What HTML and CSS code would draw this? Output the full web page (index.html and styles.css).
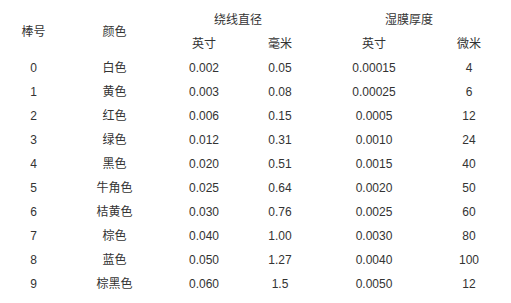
FILE: index.html
```html
<!DOCTYPE html>
<html lang="zh">
<head>
<meta charset="utf-8">
<link rel="stylesheet" href="styles.css">
</head>
<body>
<table class="spec">
  <colgroup>
    <col class="c1"><col class="c2"><col class="c3"><col class="c4"><col class="c5"><col class="c6">
  </colgroup>
  <thead>
    <tr>
      <th rowspan="2">棒号</th>
      <th rowspan="2">颜色</th>
      <th colspan="2">绕线直径</th>
      <th colspan="2">湿膜厚度</th>
    </tr>
    <tr>
      <th>英寸</th><th>毫米</th><th>英寸</th><th>微米</th>
    </tr>
  </thead>
  <tbody>
    <tr><td>0</td><td>白色</td><td>0.002</td><td>0.05</td><td>0.00015</td><td>4</td></tr>
    <tr><td>1</td><td>黄色</td><td>0.003</td><td>0.08</td><td>0.00025</td><td>6</td></tr>
    <tr><td>2</td><td>红色</td><td>0.006</td><td>0.15</td><td>0.0005</td><td>12</td></tr>
    <tr><td>3</td><td>绿色</td><td>0.012</td><td>0.31</td><td>0.0010</td><td>24</td></tr>
    <tr><td>4</td><td>黑色</td><td>0.020</td><td>0.51</td><td>0.0015</td><td>40</td></tr>
    <tr><td>5</td><td>牛角色</td><td>0.025</td><td>0.64</td><td>0.0020</td><td>50</td></tr>
    <tr><td>6</td><td>桔黄色</td><td>0.030</td><td>0.76</td><td>0.0025</td><td>60</td></tr>
    <tr><td>7</td><td>棕色</td><td>0.040</td><td>1.00</td><td>0.0030</td><td>80</td></tr>
    <tr><td>8</td><td>蓝色</td><td>0.050</td><td>1.27</td><td>0.0040</td><td>100</td></tr>
    <tr><td>9</td><td>棕黑色</td><td>0.060</td><td>1.5</td><td>0.0050</td><td>12</td></tr>
  </tbody>
</table>
</body>
</html>
```
FILE: styles.css
```css
html, body {
  margin: 0;
  padding: 0;
  background: #ffffff;
}
body {
  font-family: "Liberation Sans", "Noto Sans CJK SC", sans-serif;
  font-size: 12px;
  color: #333333;
}
.spec {
  margin-top: 8px;
  border-collapse: collapse;
  table-layout: fixed;
  width: 504px;
}
.c1 { width: 67px; }
.c2 { width: 95px; }
.c3 { width: 84px; }
.c4 { width: 68px; }
.c5 { width: 120px; }
.c6 { width: 70px; }
.spec th,
.spec td {
  padding: 0;
  height: 24px;
  text-align: center;
  vertical-align: middle;
  font-weight: normal;
  line-height: 14px;
  white-space: nowrap;
}
```
